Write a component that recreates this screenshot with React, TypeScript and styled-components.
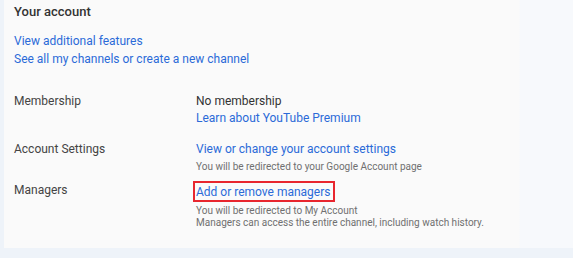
import React from "react";
import styled, { createGlobalStyle } from "styled-components";

const Global = createGlobalStyle`
  html, body { margin: 0; padding: 0; background: #eef3f9; }
  body { font-family: Roboto, "Noto Sans", Arial, sans-serif; }
`;

const Page = styled.div`
  width: 573px;
  height: 258px;
  background: #eef3f9;
  padding-left: 4px;
  box-sizing: border-box;
  overflow: hidden;
`;

const Card = styled.div`
  height: 248px;
  background: linear-gradient(to right, #fafafa 0, #fafafa 515px, #f7f9fc 516px, #f7f9fc 100%);
  padding: 3px 10px 0 10px;
  box-sizing: border-box;
`;

const Title = styled.h2`
  margin: 0;
  font-size: 13px;
  font-weight: 500;
  color: #333;
  line-height: 18px;
`;

const LinkList = styled.div`
  display: flex;
  flex-direction: column;
  margin-top: 11px;
`;

const Link = styled.a`
  color: #2b6ad8;
  font-size: 12px;
  line-height: 18px;
  text-decoration: none;
`;

const ValueLink = styled(Link)`
  line-height: 17px;
`;

const Rows = styled.div`
  display: flex;
  flex-direction: column;
  margin-top: 25px;
  gap: 9px;
`;

const Row = styled.div<{ $extra?: number }>`
  display: grid;
  grid-template-columns: 182px 1fr;
  padding-bottom: ${(p) => p.$extra ?? 0}px;
`;

const Label = styled.div`
  font-size: 12px;
  line-height: 17px;
  color: #444;
`;

const Value = styled.div`
  display: flex;
  flex-direction: column;
  align-items: flex-start;
`;

const Plain = styled.div`
  font-size: 12px;
  line-height: 17px;
  color: #333;
`;

const Notes = styled.div`
  margin-top: 3px;
  display: flex;
  flex-direction: column;
`;

const Note = styled.div`
  font-size: 10px;
  line-height: 12px;
  color: #707070;
`;

const Boxed = styled.span`
  display: inline-block;
  border: 2px solid #e8262e;
  padding: 0 3px 0 1px;
  margin: -1px 0 0 -3px;
  line-height: 15px;

  a {
    line-height: 15px;
  }
`;

export default function App() {
  return (
    <>
      <Global />
      <Page>
        <Card>
          <Title>Your account</Title>
          <LinkList>
            <Link href="#">View additional features</Link>
            <Link href="#">See all my channels or create a new channel</Link>
          </LinkList>
          <Rows>
            <Row $extra={5}>
              <Label>Membership</Label>
              <Value>
                <Plain>No membership</Plain>
                <ValueLink href="#">Learn about YouTube Premium</ValueLink>
              </Value>
            </Row>
            <Row>
              <Label>Account Settings</Label>
              <Value>
                <ValueLink href="#">View or change your account settings</ValueLink>
                <Notes>
                  <Note>You will be redirected to your Google Account page</Note>
                </Notes>
              </Value>
            </Row>
            <Row>
              <Label>Managers</Label>
              <Value>
                <Boxed>
                  <ValueLink href="#">Add or remove managers</ValueLink>
                </Boxed>
                <Notes>
                  <Note>You will be redirected to My Account</Note>
                  <Note>Managers can access the entire channel, including watch history.</Note>
                </Notes>
              </Value>
            </Row>
          </Rows>
        </Card>
      </Page>
    </>
  );
}
